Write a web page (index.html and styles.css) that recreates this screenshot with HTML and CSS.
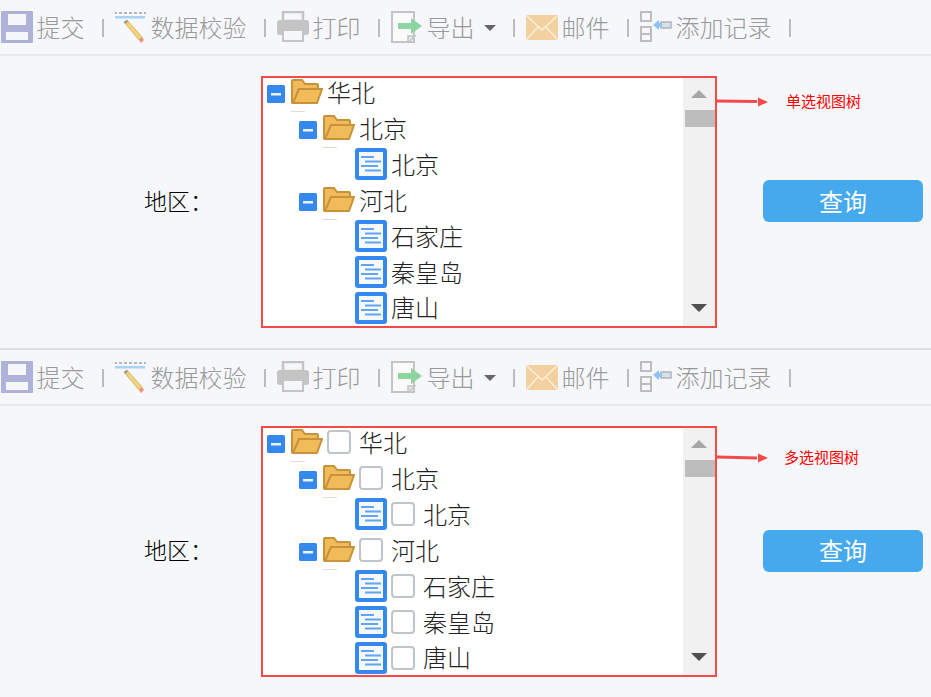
FILE: index.html
```html
<!DOCTYPE html>
<html lang="zh">
<head>
<meta charset="utf-8">
<title>视图树</title>
<link rel="stylesheet" href="styles.css">
</head>
<body>
<svg class="defs" width="0" height="0" aria-hidden="true">
  <symbol id="i-save" viewBox="0 0 32 32"><rect x="0" y="0" width="32" height="32" rx="1" fill="#aeb2d8"/><rect x="7" y="3" width="18" height="11" fill="#f6f7fa"/><rect x="5" y="21" width="22" height="8" fill="#f6f7fa"/></symbol>
  <symbol id="i-check" viewBox="0 0 32 32"><path d="M0 2h2M4 2h3M9 2h3M14 2h3M19 2h3M24 2h3M29 2h2" stroke="#b5b5b5" stroke-width="2"/><rect x="0" y="5" width="30" height="2.500" fill="#a9d3f5"/><path d="M9 11l3-2 15 17-3 3z" fill="#f2d27c" stroke="#d9b765"/><path d="M24 29l3-3 2 3-3 3z" fill="#f28f7c"/><path d="M9 11l3-2 1 2-3 2z" fill="#9a9a9a"/></symbol>
  <symbol id="i-print" viewBox="0 0 32 32"><rect x="6" y="1" width="20" height="9" fill="#f6f7fa" stroke="#c4c4c4" stroke-width="2.500"/><rect x="0" y="9" width="32" height="15" rx="3" fill="#c4c4c4"/><rect x="6" y="19" width="20" height="11" fill="#f6f7fa" stroke="#c4c4c4" stroke-width="2"/></symbol>
  <symbol id="i-export" viewBox="0 0 32 32"><path d="M1 1h22v30H1z" fill="#fafafa" stroke="#c4c4c4" stroke-width="2"/><path d="M17 32l7-7h-7z" fill="#e4e4e4" stroke="#c4c4c4" stroke-width="1.500"/><path d="M7 12h13V7l11 8-11 8v-5H7z" fill="#8ed4a0"/></symbol>
  <symbol id="i-mail" viewBox="0 0 32 32"><rect x="0" y="4" width="32" height="25" rx="2" fill="#f2d0a0"/><path d="M1 5l15 14L31 5M1 28l11-12M31 28L20 16" fill="none" stroke="#fbeedb" stroke-width="1.500"/></symbol>
  <symbol id="i-add" viewBox="0 0 32 32"><g fill="none" stroke="#bdbdbd" stroke-width="2"><rect x="1" y="1" width="10" height="9"/><rect x="1" y="16" width="10" height="14"/><path d="M1 23h10"/></g><rect x="21" y="11" width="10" height="6" fill="#cfe0f2" stroke="#b3b3b3" stroke-width="1.500"/><path d="M13 14l6-5v3h2v4h-2v3z" fill="#8cc3f5"/></symbol>
  <symbol id="i-folder" viewBox="0 0 32 26"><path d="M1 24V3a1 1 0 0 1 1-1h9l3 4h12a1 1 0 0 1 1 1v4H8L3 24z" fill="#f0bc5a" stroke="#c8923a" stroke-width="2"/><path d="M2 25l6-14h23l-5 14z" fill="#f0bc5a" stroke="#c8923a" stroke-width="2"/></symbol>
  <symbol id="i-leaf" viewBox="0 0 32 32"><rect width="32" height="32" rx="3" fill="#3588ee"/><rect x="4" y="4" width="24" height="24" fill="#f5f9fe"/><path d="M6 9h13M10 13.500h16M6 18h17M10 22.500h16" stroke="#63a4f2" stroke-width="2"/></symbol>
  <symbol id="i-minus" viewBox="0 0 18 18"><rect width="18" height="18" rx="1.500" fill="#3588ee"/><rect x="4" y="8" width="10" height="2.500" fill="#eaf3fe"/></symbol>
</svg>

<section class="panel panel-first">
  <div class="toolbar">
    <span class="tool"><svg class="ticon"><use href="#i-save"/></svg>提交</span><i class="sep"></i>
    <span class="tool"><svg class="ticon"><use href="#i-check"/></svg>数据校验</span><i class="sep"></i>
    <span class="tool"><svg class="ticon"><use href="#i-print"/></svg>打印</span><i class="sep"></i>
    <span class="tool"><svg class="ticon"><use href="#i-export"/></svg>导出<i class="caret"></i></span><i class="sep"></i>
    <span class="tool"><svg class="ticon"><use href="#i-mail"/></svg>邮件</span><i class="sep"></i>
    <span class="tool"><svg class="ticon"><use href="#i-add"/></svg>添加记录</span><i class="sep"></i>
  </div>
  <div class="body">
    <label class="field-label">地区：</label>
    <div class="tree">
      <div class="rows">
        <div class="row lv0"><svg class="minus"><use href="#i-minus"/></svg><svg class="folder"><use href="#i-folder"/></svg><span class="name">华北</span></div>
        <div class="row lv1"><svg class="minus"><use href="#i-minus"/></svg><svg class="folder"><use href="#i-folder"/></svg><span class="name">北京</span></div>
        <div class="row lv2"><svg class="leaf"><use href="#i-leaf"/></svg><span class="name">北京</span></div>
        <div class="row lv1"><svg class="minus"><use href="#i-minus"/></svg><svg class="folder"><use href="#i-folder"/></svg><span class="name">河北</span></div>
        <div class="row lv2"><svg class="leaf"><use href="#i-leaf"/></svg><span class="name">石家庄</span></div>
        <div class="row lv2"><svg class="leaf"><use href="#i-leaf"/></svg><span class="name">秦皇岛</span></div>
        <div class="row lv2"><svg class="leaf"><use href="#i-leaf"/></svg><span class="name">唐山</span></div>
      </div>
      <div class="scrollbar"><i class="up"></i><i class="thumb"></i><i class="down"></i></div>
    </div>
    <button class="query">查询</button>
    <svg class="arrow arrow-a" width="52" height="10"><path d="M0 4l40 .5" stroke="#f44a4a" stroke-width="3"/><path d="M41 .500l10 4.500-10 4.500z" fill="#f44a4a"/></svg>
    <span class="note note-a">单选视图树</span>
  </div>
</section>

<section class="panel">
  <div class="toolbar">
    <span class="tool"><svg class="ticon"><use href="#i-save"/></svg>提交</span><i class="sep"></i>
    <span class="tool"><svg class="ticon"><use href="#i-check"/></svg>数据校验</span><i class="sep"></i>
    <span class="tool"><svg class="ticon"><use href="#i-print"/></svg>打印</span><i class="sep"></i>
    <span class="tool"><svg class="ticon"><use href="#i-export"/></svg>导出<i class="caret"></i></span><i class="sep"></i>
    <span class="tool"><svg class="ticon"><use href="#i-mail"/></svg>邮件</span><i class="sep"></i>
    <span class="tool"><svg class="ticon"><use href="#i-add"/></svg>添加记录</span><i class="sep"></i>
  </div>
  <div class="body body-second">
    <label class="field-label">地区：</label>
    <div class="tree">
      <div class="rows">
        <div class="row lv0"><svg class="minus"><use href="#i-minus"/></svg><svg class="folder"><use href="#i-folder"/></svg><i class="box"></i><span class="name multi">华北</span></div>
        <div class="row lv1"><svg class="minus"><use href="#i-minus"/></svg><svg class="folder"><use href="#i-folder"/></svg><i class="box"></i><span class="name multi">北京</span></div>
        <div class="row lv2"><svg class="leaf"><use href="#i-leaf"/></svg><i class="box"></i><span class="name multi">北京</span></div>
        <div class="row lv1"><svg class="minus"><use href="#i-minus"/></svg><svg class="folder"><use href="#i-folder"/></svg><i class="box"></i><span class="name multi">河北</span></div>
        <div class="row lv2"><svg class="leaf"><use href="#i-leaf"/></svg><i class="box"></i><span class="name multi">石家庄</span></div>
        <div class="row lv2"><svg class="leaf"><use href="#i-leaf"/></svg><i class="box"></i><span class="name multi">秦皇岛</span></div>
        <div class="row lv2"><svg class="leaf"><use href="#i-leaf"/></svg><i class="box"></i><span class="name multi">唐山</span></div>
      </div>
      <div class="scrollbar"><i class="up"></i><i class="thumb"></i><i class="down"></i></div>
    </div>
    <button class="query">查询</button>
    <svg class="arrow arrow-b" width="52" height="10"><path d="M0 4l40 1" stroke="#f44a4a" stroke-width="3"/><path d="M41 .500l10 4.500-10 4.500z" fill="#f44a4a"/></svg>
    <span class="note note-b">多选视图树</span>
  </div>
</section>
</body>
</html>
```
FILE: styles.css
```css
* { box-sizing: border-box; }
html, body { margin: 0; height: 100%; }
body {
  width: 931px;
  height: 697px;
  overflow: hidden;
  background: #f6f7fa;
  font-family: "Noto Sans CJK SC", "Noto Sans", sans-serif;
}
.defs { position: absolute; }
.panel-first { height: 350px; border-bottom: 2px solid #dcdde0; }

.toolbar {
  display: flex;
  align-items: center;
  height: 56px;
  padding: 0 0 0 1px;
  border-bottom: 2px solid #e8e9ec;
  font-size: 24px;
  font-weight: 300;
  color: #999;
}
.tool { display: flex; align-items: center; gap: 3.5px; line-height: 54px; }
.ticon { width: 32px; height: 32px; flex: none; }
.sep { width: 2px; height: 18px; margin: 2px 11px 0 17.5px; background: #bcbcbc; }
.caret {
  width: 0;
  height: 0;
  margin: 2px 0 0 5.5px;
  border: 6px solid transparent;
  border-top: 6px solid #666;
  border-bottom: 0;
}

.body {
  position: relative;
  display: flex;
  align-items: center;
  height: 252px;
  margin-top: 20px;
  padding-left: 144px;
}
.body-second { height: 251px; }
.field-label { width: 117px; margin-top: -5px; font-size: 23px; font-weight: 300; color: #000; }
.tree {
  display: flex;
  width: 456px;
  height: 100%;
  border: 2px solid #f44a4a;
  background: #fff;
}
.rows { flex: 1; margin-top: -4px; padding-left: 4px; }
.row {
  position: relative;
  display: flex;
  align-items: center;
  height: 36px;
  font-size: 24px;
  font-weight: 300;
  color: #222;
}
.row:last-child { height: 35px; }
.lv1 { padding-left: 32px; }
.lv2 { padding-left: 88px; }
.minus { width: 18px; height: 18px; margin: 4px 6px 0 0; flex: none; }
.folder { position: relative; width: 32px; height: 26px; margin-top: -2px; flex: none; }
.lv0::after, .lv1::after {
  content: "";
  position: absolute;
  top: 37px;
  width: 14px;
  height: 1px;
  background: #e6dccd;
}
.lv0::after { left: 24px; }
.lv1::after { left: 56px; }
.leaf { width: 32px; height: 32px; flex: none; }
.name { margin: -1px 0 0 4px; line-height: 26px; white-space: nowrap; }
.name.multi { margin-left: 8px; }
.box {
  width: 24px;
  height: 24px;
  margin-left: 4px;
  flex: none;
  border: 2px solid #bfc4c8;
  border-radius: 4px;
  background: #fff;
}

.scrollbar {
  position: relative;
  width: 32px;
  flex: none;
  background: #f1f1f1;
}
.up, .down {
  position: absolute;
  left: 8px;
  width: 0;
  height: 0;
  border: 8px solid transparent;
}
.up { top: 12px; border-top: 0; border-bottom-color: #a6a6a6; }
.down { bottom: 14px; border-bottom: 0; border-top-color: #505050; }
.thumb {
  position: absolute;
  top: 32px;
  left: 2px;
  right: 0;
  height: 17px;
  background: #bdbdbd;
}

.query {
  width: 160px;
  height: 42px;
  margin: -2px 0 0 46px;
  padding: 0 0 2px;
  border: 0;
  border-radius: 6px;
  background: #46a9ed;
  color: #fff;
  font: 400 24px "Noto Sans CJK SC", sans-serif;
}
.arrow { position: absolute; left: 717px; }
.arrow-a { top: 21px; }
.arrow-b { top: 27px; }
.note { position: absolute; font-size: 15px; color: #f00; white-space: nowrap; }
.note-a { left: 786px; top: 14px; }
.note-b { left: 784px; top: 20px; }
```
